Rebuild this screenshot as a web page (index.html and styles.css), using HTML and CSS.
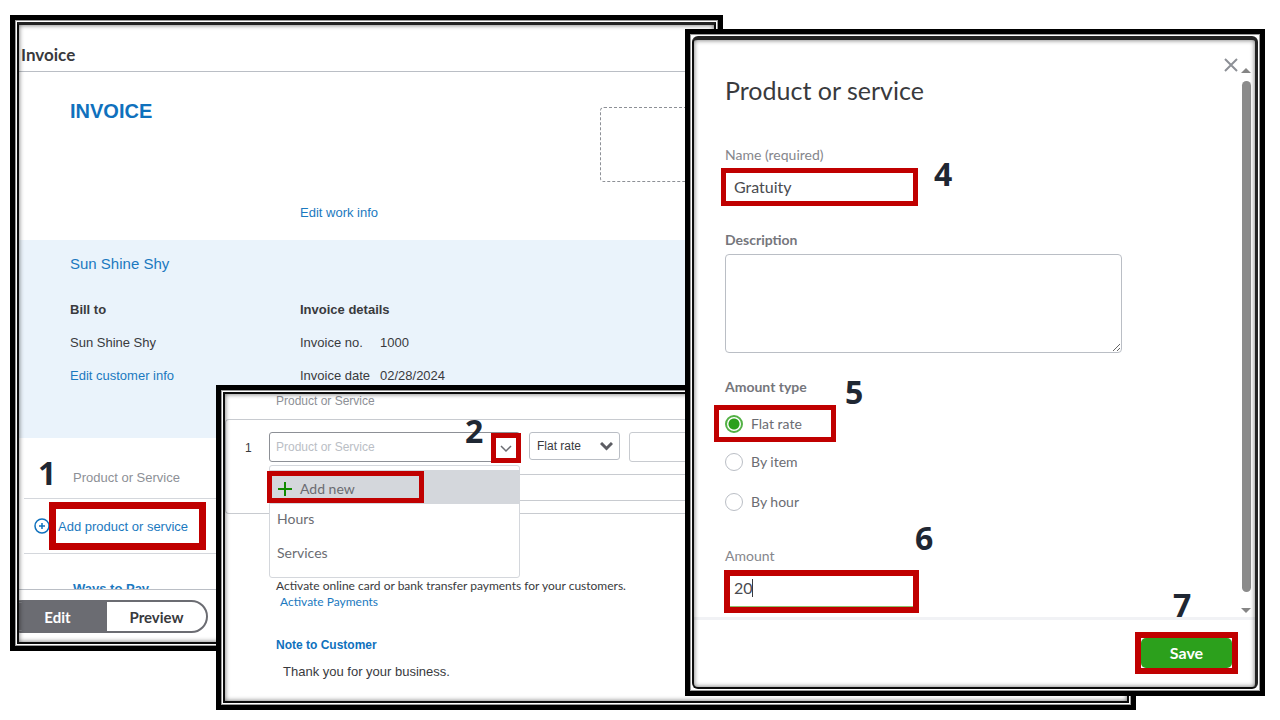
FILE: index.html
```html
<!DOCTYPE html>
<html lang="en">
<head>
  <meta charset="UTF-8" />
  <meta name="viewport" content="width=device-width, initial-scale=1.0"/>
  <title>Invoice - Add Gratuity</title>
  <link rel="stylesheet" href="styles.css">
</head>
<body>
  <!-- Invoice -->
  <section class="window window-invoice">
    <div class="pane">
      <h1 class="title">Invoice</h1>
      <div class="doc-head">
        <h2>INVOICE</h2>
        <div class="logo-drop"></div>
        <a class="work-link" href="#">Edit work info</a>
      </div>

      <div class="customer">
        <a class="customer-name" href="#">Sun Shine Shy</a>
        <div class="customer-cols">
          <div class="stack">
            <h3>Bill to</h3>
            <span>Sun Shine Shy</span>
            <a href="#">Edit customer info</a>
          </div>
          <div class="stack">
            <h3>Invoice details</h3>
            <div class="detail"><span>Invoice no.</span><span>1000</span></div>
            <div class="detail"><span>Invoice date</span><span>02/28/2024</span></div>
          </div>
        </div>
      </div>

      <table class="items">
        <thead>
          <tr><th>Product or Service</th></tr>
        </thead>
        <tbody>
          <tr>
            <td>
              <div class="add-row">
                <svg width="16" height="16" viewBox="0 0 16 16" fill="none" stroke="#0f71bd" stroke-width="1.5">
                  <circle cx="8" cy="8" r="7"/>
                  <path d="M8 5v6M5 8h6"/>
                </svg>
                <span class="mark mark-add"><a href="#">Add product or service</a></span>
              </div>
            </td>
          </tr>
        </tbody>
      </table>
      <div class="ways"><a href="#">Ways to Pay</a></div>

      <div class="footer">
        <div class="toggle">
          <button type="button" class="active">Edit</button>
          <button type="button">Preview</button>
        </div>
      </div>
      <span class="step step-1">1</span>
    </div>
  </section>

  <!-- Line item with open dropdown -->
  <section class="window window-items">
    <div class="pane">
      <label class="col-label" for="product">Product or Service</label>
      <div class="line-card">
        <div class="line">
          <span class="line-no">1</span>
          <div class="combo">
            <input type="text" id="product" placeholder="Product or Service">
            <span class="mark mark-arrow">
              <button type="button" aria-label="Open list">
                <svg width="12" height="8" viewBox="0 0 12 8" fill="none" stroke="#6b6c72" stroke-width="1.5"><path d="M1 1l5 5 5-5"/></svg>
              </button>
            </span>
            <div class="menu">
              <button type="button" class="menu-item selected">
                <span class="mark mark-new">
                  <svg width="14" height="14" viewBox="0 0 14 14" stroke="#108a00" stroke-width="2"><path d="M7 0v14M0 7h14"/></svg>
                  Add new
                </span>
              </button>
              <button type="button" class="menu-item">Hours</button>
              <button type="button" class="menu-item">Services</button>
            </div>
          </div>
          <div class="rate">
            <select aria-label="Rate type">
              <option>Flat rate</option>
              <option>By item</option>
              <option>By hour</option>
            </select>
            <svg width="13" height="9" viewBox="0 0 13 9" fill="none" stroke="#5c5d63" stroke-width="3"><path d="M1 1l5.500 5.500 5.500-5.500"/></svg>
          </div>
          <input type="text" class="price" aria-label="Rate">
        </div>
        <input type="text" class="note" aria-label="Item description">
      </div>

      <div class="notes">
        <p>Activate online card or bank transfer payments for your customers.</p>
        <a class="activate" href="#">Activate Payments</a>
        <h3>Note to Customer</h3>
        <p class="thanks">Thank you for your business.</p>
      </div>
      <span class="step step-2">2</span>
      <span class="step step-3">3</span>
    </div>
  </section>

  <!-- Product or service dialog -->
  <section class="window window-dialog">
    <div class="pane">
      <div class="dialog-body">
        <form class="product-form" id="product-form">
          <h2>Product or service</h2>

          <label for="name">Name (required)</label>
          <div class="mark mark-name"><input type="text" id="name" name="name" value="Gratuity"></div>

          <label class="strong" for="description">Description</label>
          <textarea id="description" name="description"></textarea>

          <fieldset>
            <legend class="strong">Amount type</legend>
            <div class="mark mark-flat">
              <label class="radio"><input type="radio" name="type" checked>Flat rate</label>
            </div>
            <label class="radio"><input type="radio" name="type">By item</label>
            <label class="radio"><input type="radio" name="type">By hour</label>
          </fieldset>

          <label for="amount">Amount</label>
          <div class="mark mark-amount">
            <input type="text" id="amount" name="amount" value="20">
            <span class="caret"></span>
          </div>
        </form>
        <button type="button" class="close" aria-label="Close">
          <svg width="14" height="14" viewBox="0 0 14 14" stroke="#8d9096" stroke-width="2"><path d="M1 1l12 12M13 1L1 13"/></svg>
        </button>
        <div class="scrollbar">
          <svg width="10" height="5" viewBox="0 0 10 5" fill="#858585"><path d="M0 5l5-5 5 5z"/></svg>
          <div class="thumb"></div>
          <svg width="10" height="5" viewBox="0 0 10 5" fill="#858585"><path d="M0 0l5 5 5-5z"/></svg>
        </div>
      </div>
      <div class="dialog-footer">
        <div class="mark mark-save"><button type="submit" form="product-form">Save</button></div>
      </div>
      <span class="step step-4">4</span>
      <span class="step step-5">5</span>
      <span class="step step-6">6</span>
      <span class="step step-7">7</span>
    </div>
  </section>
</body>
</html>
```
FILE: styles.css
```css
* {
  box-sizing: border-box;
}
body {
  margin: 0;
  background: #fff;
  color: #393a3d;
  font-family: "Liberation Sans", Arial, sans-serif;
  font-size: 13px;
  line-height: 20px;
}
h1, h2, h3, p {
  margin: 0;
}
a {
  color: #1b79c0;
  text-decoration: none;
}
svg {
  display: block;
  flex: none;
}
input, select, textarea, button {
  font: inherit;
  color: inherit;
  margin: 0;
}
button {
  border: none;
  background: none;
  padding: 0;
  cursor: pointer;
}

/* framed windows */
.window {
  position: absolute;
  border: 5px solid #000;
  padding: 2px;
  background: #fff;
  box-shadow: inset 0 0 0 1px #999;
}
.window-invoice {
  left: 10px;
  right: 557px;
  top: 15px;
}
.window-items {
  left: 216px;
  right: 144px;
  top: 385px;
}
.window-dialog {
  left: 685px;
  right: 15px;
  top: 29px;
}
.pane {
  position: relative;
  overflow: hidden;
  border: 2px solid #0c0c0c;
  background: #fff;
}
.pane::after {
  content: "";
  position: absolute;
  inset: 0;
  box-shadow: inset 0 0 5px rgba(0, 0, 0, 0.6);
  pointer-events: none;
}
.window-invoice .pane {
  border-top: 3px solid #222;
}
.window-dialog .pane {
  border-top: 4px solid #222;
  border-right: 3px solid #222;
}
.window-dialog {
  font-family: Lato, sans-serif;
}

/* red highlights and step numbers */
.mark {
  display: flex;
  align-items: center;
  border: 5px solid #c00000;
}
.step {
  position: absolute;
  color: #1f2733;
  font-family: "Open Sans", sans-serif;
  font-size: 32px;
  line-height: 32px;
  font-weight: bold;
}
.step-1 { left: 19px; top: 432px; }
.step-2 { left: 240px; top: 21px; }
.step-3 { left: 205px; top: 102px; }
.step-4 { left: 240px; top: 118px; }
.step-5 { left: 151px; top: 336px; }
.step-6 { left: 221px; top: 482px; }
.step-7 { left: 479px; top: 549px; }

/* invoice */
.title {
  padding: 20px 2px 6px;
  border-bottom: 1px solid #babec5;
  font-family: Lato, sans-serif;
  font-size: 17px;
}
.doc-head {
  display: grid;
  grid-template-columns: 230px 300px 1fr;
  row-gap: 21px;
  padding: 27px 0 17px 51px;
}
.doc-head h2 {
  grid-column: 1 / 3;
  color: #0f71bd;
  font-size: 20px;
  line-height: 24px;
}
.logo-drop {
  height: 75px;
  margin-top: 8px;
  border: 1px dashed #8d9096;
  border-radius: 4px;
}
.work-link {
  grid-column: 2;
}
.customer {
  padding: 12px 0 52px 51px;
  background: #eaf3fb;
}
.customer-name {
  font-size: 15px;
  line-height: 24px;
}
.customer-cols {
  display: grid;
  grid-template-columns: 230px 1fr;
  margin-top: 24px;
}
.stack {
  display: flex;
  flex-direction: column;
  gap: 13px;
}
.stack h3 {
  font-size: 13px;
}
.detail {
  display: grid;
  grid-template-columns: 80px 1fr;
}
.items {
  width: 100%;
  border-spacing: 0;
  padding-left: 5px;
}
.items th {
  padding: 30px 0 10px 49px;
  border-bottom: 1px solid #d4d7dc;
  color: #8d9096;
  font-weight: normal;
  text-align: left;
}
.items td {
  padding: 3px 0 3px 10px;
  border-bottom: 1px solid #d4d7dc;
}
.add-row {
  display: flex;
  align-items: center;
}
.mark-add {
  height: 48px;
  margin-left: -1px;
  padding: 2px 11px 0 2px;
  border-width: 7px;
}
.ways {
  height: 35px;
  padding: 25px 0 0 54px;
  overflow: hidden;
  font-weight: bold;
}
.footer {
  display: flex;
  padding: 10px 0 9px;
  border-top: 1px solid #babec5;
}
.toggle {
  display: flex;
  margin-left: -13px;
  border: 2px solid #6b6c72;
  border-radius: 17px;
  overflow: hidden;
  font-family: Lato, sans-serif;
  font-size: 15px;
  font-weight: bold;
}
.toggle button {
  width: 99px;
  height: 29px;
}
.toggle .active {
  background: #6b6c72;
  color: #fff;
}

/* line items */
.col-label {
  display: block;
  padding: 0 0 11px 51px;
  color: #8d9096;
  font-size: 12px;
  line-height: 14px;
}
.line-card {
  padding: 12px 0 12px 43px;
  border: 1px solid #c8cbd0;
  border-right: none;
  border-radius: 4px 0 0 4px;
}
.line {
  display: grid;
  grid-template-columns: 251px 91px 1fr;
  column-gap: 9px;
  position: relative;
  height: 30px;
}
.line-no {
  position: absolute;
  left: -24px;
  top: 6px;
  font-size: 12px;
}
.combo {
  position: relative;
  display: flex;
  height: 30px;
  border: 1px solid #8d9096;
  border-radius: 3px;
  font-size: 12px;
}
.combo input {
  flex: 1;
  min-width: 0;
  padding: 0 6px;
  border: none;
  background: none;
  outline: none;
}
.combo input::placeholder {
  color: #babec5;
}
.mark-arrow {
  height: 30px;
  margin-right: -2px;
}
.mark-arrow button {
  width: 20px;
  padding: 2px 4px 0;
}
.menu {
  position: absolute;
  z-index: 1;
  left: -1px;
  right: -1px;
  top: 32px;
  padding: 4px 0 5px;
  border: 1px solid #d4d7dc;
  border-radius: 3px;
  background: #fff;
  font-family: Lato, sans-serif;
  font-size: 14px;
}
.menu-item {
  display: block;
  width: 100%;
  height: 34px;
  padding: 0 7px 4px;
  color: #6b6c72;
  text-align: left;
}
.menu-item.selected {
  padding: 0;
  background: #d4d7dc;
}
.mark-new {
  width: 157px;
  height: 32px;
  gap: 8px;
  margin-left: -3px;
  padding: 4px 0 0 6px;
}
.rate {
  display: grid;
  align-items: center;
  height: 28px;
}
.rate select, .rate svg {
  grid-area: 1 / 1;
}
.rate select {
  appearance: none;
  width: 100%;
  height: 28px;
  padding: 0 7px;
  border: 1px solid #babec5;
  border-radius: 3px;
  background: #fff;
  font-size: 12px;
}
.rate svg {
  justify-self: end;
  margin-right: 7px;
  pointer-events: none;
}
.price, .note {
  width: 100%;
  height: 30px;
  border: 1px solid #c8cbd0;
  border-radius: 3px;
}
.note {
  display: block;
  height: 27px;
  margin-top: 12px;
}
.notes {
  padding: 64px 0 21px 51px;
  font-family: Lato, sans-serif;
  font-size: 12px;
  line-height: 16px;
}
.activate {
  display: block;
  padding-left: 4px;
}
.notes h3 {
  margin-top: 27px;
  color: #0f71bd;
  font-family: "Liberation Sans", Arial, sans-serif;
  font-size: 12px;
}
.notes .thanks {
  margin-top: 11px;
  padding-left: 7px;
  font-family: "Liberation Sans", Arial, sans-serif;
  font-size: 13px;
}

/* dialog */
.window-dialog .pane {
  border-radius: 6px;
}
.dialog-body {
  display: flex;
}
.product-form {
  flex: 1;
  padding: 34px 0 4px 31px;
  color: #6b6c72;
  font-size: 14px;
}
.product-form h2 {
  margin-bottom: 39px;
  color: #393a3d;
  font-size: 25px;
  line-height: 32px;
  font-weight: normal;
}
.product-form > label {
  display: block;
  color: #85868c;
}
.product-form .strong {
  color: #75767c;
  font-weight: bold;
}
.product-form input[type="text"] {
  width: 100%;
  height: 28px;
  padding: 0 8px 2px;
  border: none;
  outline: none;
  color: #4a4b50;
  font-size: 16px;
}
.mark-name {
  width: 197px;
  margin: 3px 0 24px -4px;
}
.product-form textarea {
  display: block;
  width: 100%;
  max-width: 397px;
  height: 99px;
  margin: 4px 0 24px;
  border: 1px solid #babec5;
  border-radius: 4px;
}
fieldset {
  display: block;
  margin: 0 0 34px;
  padding: 0;
  border: none;
}
legend {
  padding: 0;
}
.mark-flat {
  width: 122px;
  height: 37px;
  margin: 8px 0 10px -11px;
  padding-left: 6px;
}
.radio {
  display: flex;
  align-items: center;
  gap: 8px;
}
.radio + .radio {
  margin-top: 20px;
}
.radio input {
  appearance: none;
  width: 18px;
  height: 18px;
  border: 1px solid #babec5;
  border-radius: 50%;
}
.radio input:checked {
  border: 2px solid #53b145;
  background: radial-gradient(circle, #2ca01c 5px, #fff 6px);
}
.mark-amount {
  position: relative;
  width: 195px;
  height: 43px;
  margin: 4px 0 0 -1px;
  border-width: 6px;
}
.product-form .mark-amount input {
  height: 31px;
  padding: 0 4px 7px;
  border-bottom: 1px solid #8fbf6a;
}
.caret {
  position: absolute;
  left: 22px;
  top: 3px;
  width: 1px;
  height: 18px;
  background: #393a3d;
}
.close {
  align-self: flex-start;
  margin-top: 18px;
}
.scrollbar {
  display: flex;
  flex-direction: column;
  align-items: center;
  gap: 8px;
  width: 16px;
  margin-right: 1px;
  padding: 28px 0 4px;
}
.thumb {
  flex: 1;
  width: 9px;
  margin-bottom: 8px;
  border-radius: 5px;
  background: #8b8b8b;
}
.dialog-footer {
  display: flex;
  justify-content: flex-end;
  padding: 12px 17px 13px;
  border-top: 3px solid #f1f2f5;
}
.mark-save {
  border-width: 6px;
}
.mark-save button {
  width: 91px;
  height: 30px;
  border-radius: 5px;
  background: #2ca01c;
  color: #fff;
  font-size: 16px;
  font-weight: bold;
}
```
